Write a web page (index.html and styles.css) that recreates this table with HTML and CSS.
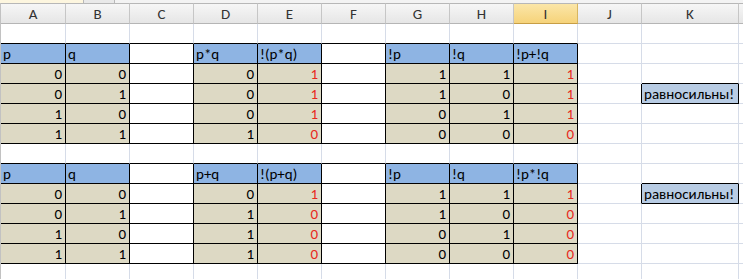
FILE: index.html
```html
<!DOCTYPE html>
<html>
<head>
<meta charset="utf-8">
<link rel="stylesheet" href="styles.css">
</head>
<body>
<div class="strip"><div class="strip-left"></div><div class="strip-tab"></div></div>
<table class="sheet">
<thead>
<tr>
<th class="ca">A</th><th>B</th><th>C</th><th>D</th><th>E</th><th>F</th><th>G</th><th>H</th><th class="sel">I</th><th>J</th><th class="ck">K</th><th class="cl"></th>
</tr>
</thead>
<tbody>
<tr><td class="bb"></td><td class="bb"></td><td class="bb"></td><td class="bb"></td><td class="bb"></td><td class="bb"></td><td class="bb"></td><td class="bb"></td><td class="bb"></td><td></td><td></td><td></td></tr>
<tr><td class="h">p</td><td class="h">q</td><td class="w"></td><td class="h">p*q</td><td class="h">!(p*q)</td><td class="w"></td><td class="h">!p</td><td class="h">!q</td><td class="h">!p+!q</td><td></td><td></td><td></td></tr>
<tr><td class="n">0</td><td class="n">0</td><td class="w"></td><td class="n">0</td><td class="n r">1</td><td class="w"></td><td class="n">1</td><td class="n">1</td><td class="n r">1</td><td></td><td class="bb"></td><td></td></tr>
<tr><td class="n">0</td><td class="n">1</td><td class="w"></td><td class="n">0</td><td class="n r">1</td><td class="w"></td><td class="n">1</td><td class="n">0</td><td class="n r">1</td><td class="br"></td><td class="eq">равносильны!</td><td></td></tr>
<tr><td class="n">1</td><td class="n">0</td><td class="w"></td><td class="n">0</td><td class="n r">1</td><td class="w"></td><td class="n">0</td><td class="n">1</td><td class="n r">1</td><td></td><td></td><td></td></tr>
<tr><td class="n">1</td><td class="n">1</td><td class="w"></td><td class="n">1</td><td class="n r">0</td><td class="w"></td><td class="n">0</td><td class="n">0</td><td class="n r">0</td><td></td><td></td><td></td></tr>
<tr><td class="bb"></td><td class="bb"></td><td class="bb"></td><td class="bb"></td><td class="bb"></td><td class="bb"></td><td class="bb"></td><td class="bb"></td><td class="bb"></td><td></td><td></td><td></td></tr>
<tr><td class="h">p</td><td class="h">q</td><td class="w"></td><td class="h">p+q</td><td class="h">!(p+q)</td><td class="w"></td><td class="h">!p</td><td class="h">!q</td><td class="h">!p*!q</td><td></td><td class="bb"></td><td></td></tr>
<tr><td class="n">0</td><td class="n">0</td><td class="w"></td><td class="n">0</td><td class="n r">1</td><td class="w"></td><td class="n">1</td><td class="n">1</td><td class="n r">1</td><td class="br"></td><td class="eq">равносильны!</td><td></td></tr>
<tr><td class="n">0</td><td class="n">1</td><td class="w"></td><td class="n">1</td><td class="n r">0</td><td class="w"></td><td class="n">1</td><td class="n">0</td><td class="n r">0</td><td></td><td></td><td></td></tr>
<tr><td class="n">1</td><td class="n">0</td><td class="w"></td><td class="n">1</td><td class="n r">0</td><td class="w"></td><td class="n">0</td><td class="n">1</td><td class="n r">0</td><td></td><td></td><td></td></tr>
<tr><td class="n">1</td><td class="n">1</td><td class="w"></td><td class="n">1</td><td class="n r">0</td><td class="w"></td><td class="n">0</td><td class="n">0</td><td class="n r">0</td><td></td><td></td><td></td></tr>
<tr><td></td><td></td><td></td><td></td><td></td><td></td><td></td><td></td><td></td><td></td><td></td><td></td></tr>
</tbody>
</table>
</body>
</html>
```
FILE: styles.css
```css
html, body {
  margin: 0;
  padding: 0;
  background: #ffffff;
  overflow: hidden;
}
body {
  font-family: Carlito, "Liberation Sans", Arial, sans-serif;
  font-size: 15px;
  color: #000;
}
.strip {
  height: 3px;
  display: flex;
  background: #f3f3f3;
}
.strip-left {
  width: 83px;
  background: #fdf6df;
}
.strip-tab {
  width: 30px;
  background: #e9e9e9;
  border-left: 1px solid #b8b8b8;
  border-right: 1px solid #b8b8b8;
}
.sheet {
  border-collapse: separate;
  border-spacing: 0;
  table-layout: fixed;
  width: 760px;
  border-left: 1px solid #c2c2c2;
}
.sheet th {
  box-sizing: border-box;
  width: 64px;
  height: 21px;
  padding: 0;
  font-weight: normal;
  color: #333;
  text-align: center;
  vertical-align: middle;
  background: linear-gradient(#f6f6f6, #e6e6e6);
  border-top: 1px solid #b7b7b7;
  border-right: 1px solid #c6c6c6;
  border-bottom: 1px solid #b5b5b5;
  line-height: 18px;
}
.sheet th.ca { width: 65px; }
.sheet th.ck { width: 97px; }
.sheet th.cl { width: auto; }
.sheet th.sel {
  background: linear-gradient(#fbe6a8, #f6d37a);
  border-right-color: #d8b660;
  border-bottom-color: #c79e45;
  color: #333;
}
.sheet td {
  height: 17px;
  padding: 2px 3px 0 3px;
  line-height: 17px;
  vertical-align: bottom;
  border-right: 1px solid #d6dce8;
  border-bottom: 1px solid #d6dce8;
  white-space: nowrap;
  overflow: hidden;
}
.sheet td.bb { border-bottom-color: #000; }
.sheet td.br { border-right-color: #000; }
.sheet td.h {
  background: #8eb4e3;
  border-color: #000;
  padding-left: 2px;
}
.sheet td.w { border-color: #000; }
.sheet td.n {
  background: #ddd9c4;
  border-color: #000;
  text-align: right;
}
.sheet td.r { color: #e8291c; }
.sheet td.eq {
  background: #b8cce4;
  border-color: #000;
  padding-left: 2px;
  padding-right: 0;
  overflow: visible;
}
```
